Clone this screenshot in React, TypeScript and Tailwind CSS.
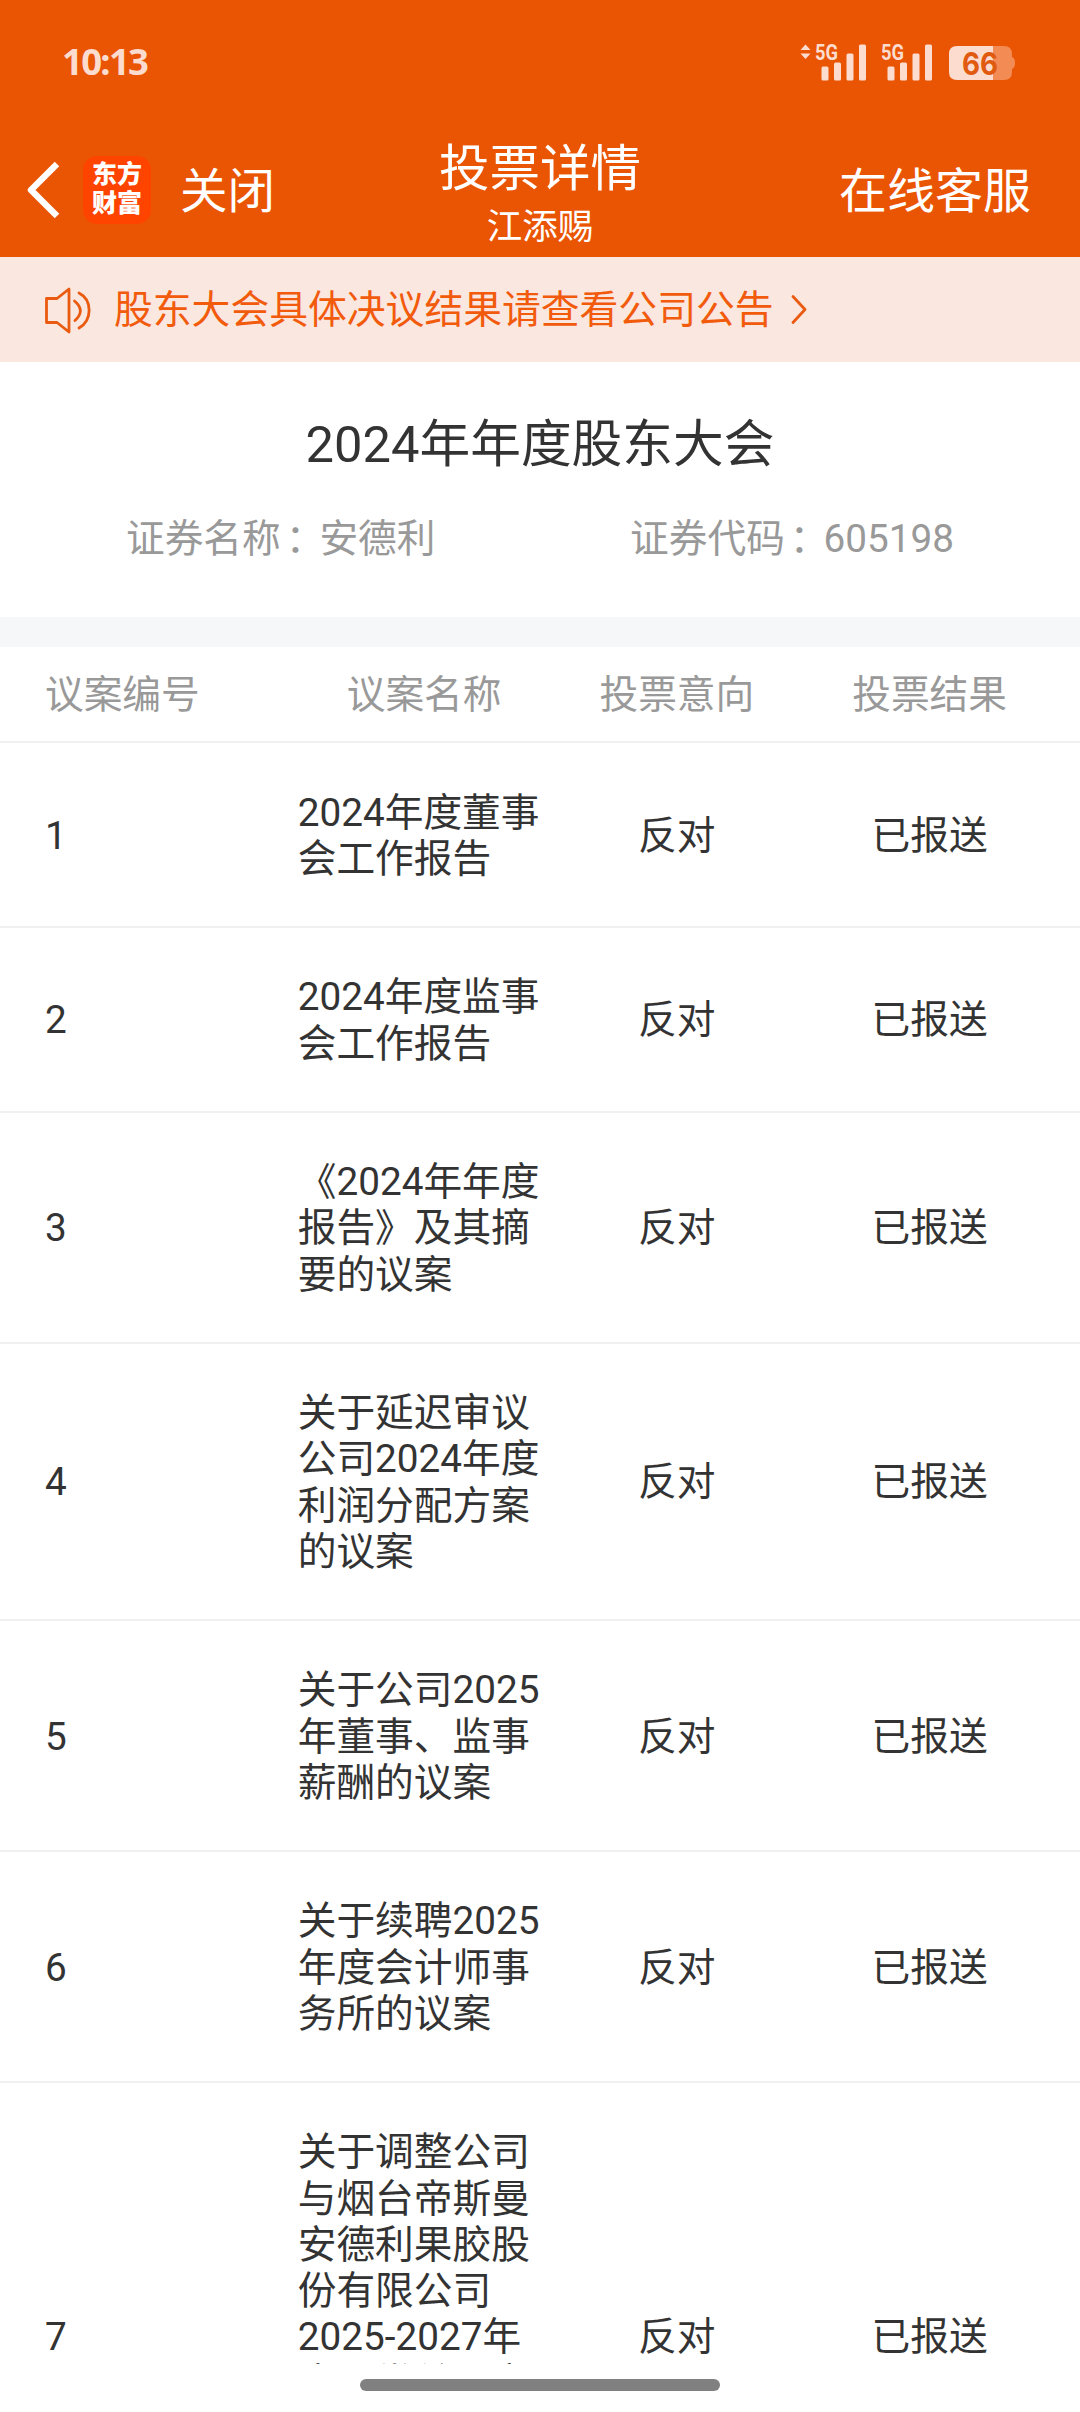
import React from 'react';

interface Proposal {
  id: number;
  name: string;
  intent: string;
  result: string;
}

const proposals: Proposal[] = [
  { id: 1, name: '2024年度董事会工作报告', intent: '反对', result: '已报送' },
  { id: 2, name: '2024年度监事会工作报告', intent: '反对', result: '已报送' },
  { id: 3, name: '《2024年年度报告》及其摘要的议案', intent: '反对', result: '已报送' },
  { id: 4, name: '关于延迟审议公司2024年度利润分配方案的议案', intent: '反对', result: '已报送' },
  { id: 5, name: '关于公司2025年董事、监事薪酬的议案', intent: '反对', result: '已报送' },
  { id: 6, name: '关于续聘2025年度会计师事务所的议案', intent: '反对', result: '已报送' },
  { id: 7, name: '关于调整公司与烟台帝斯曼安德利果胶股份有限公司2025-2027年度日常关联交', intent: '反对', result: '已报送' },
];

const Signal = ({ active }: { active?: boolean }) => (
  <svg className="overflow-visible" width="68" height="40" viewBox="0 0 68 40" fill="#fbdccf">
    {active && (
      <>
        <path d="M0.5 8 L5.5 2.5 L10.5 8 Z" />
        <path d="M0.5 11.5 L5.5 17 L10.5 11.5 Z" />
      </>
    )}
    <text x="15" y="17.5" fontSize="22.5" fontWeight="700" fontFamily="Roboto, sans-serif" textLength="23" lengthAdjust="spacingAndGlyphs">5G</text>
    <rect x="21.5" y="24.5" width="7" height="14" rx="1.5" />
    <rect x="34" y="20.5" width="7" height="18" rx="1.5" />
    <rect x="46.5" y="11.5" width="7" height="27" rx="1.5" />
    <rect x="59" y="2.5" width="7" height="36" rx="1.5" />
  </svg>
);

const Battery = () => (
  <svg width="68" height="36" viewBox="0 0 68 36">
    <path d="M44 0 H55 Q63 0 63 8 V11 Q66 12 66 17 Q66 22 63 23 V26 Q63 34 55 34 H44 Z" fill="#f38b54" />
    <path d="M8 0 H44 V34 H8 Q0 34 0 26 V8 Q0 0 8 0 Z" fill="#fbdccf" />
    <text x="13" y="28.5" fontSize="31" fontWeight="700" fontFamily="Inter, sans-serif" fill="#e05a10" textLength="36" lengthAdjust="spacingAndGlyphs">66</text>
  </svg>
);

const Field = ({ label, value }: { label: string; value: string }) => (
  <span>
    {label}
    <span className="inline-block translate-x-[5px]">：</span>
    {value}
  </span>
);

const App: React.FC = () => {
  return (
    <div className="relative w-[1080px] h-[2412px] overflow-hidden bg-white text-[#333333] text-[38.7px] leading-[46.2px] font-[Roboto,'Noto_Sans_CJK_SC',sans-serif]">
      {/* HEADER */}
      <header className="h-[257px] bg-[#ea5504] text-white">
        <div className="h-[122px] pl-[62px] pr-[63px] flex items-center justify-between">
          <span className="text-[36.5px] font-bold tracking-[-1.7px] text-[#fbdccf] font-['Noto_Sans',sans-serif]">10:13</span>
          <div className="flex items-start pt-0.5">
            <Signal active />
            <div className="w-[66px] -ml-0.5"><Signal /></div>
            <div className="ml-[17px] pt-1"><Battery /></div>
          </div>
        </div>
        <div className="h-[135px] flex items-center justify-between">
          <div className="w-[320px] flex items-center">
            <svg className="ml-[25px]" width="36" height="58" viewBox="0 0 36 58" fill="none" stroke="#fff" strokeWidth="6.4" strokeLinejoin="round">
              <path d="M32 3 L6 29 L32 55" />
            </svg>
            <div className="ml-[22px] w-[68px] h-[68px] pb-px rounded-[14px] bg-[#ff4400] flex flex-col items-center justify-center text-[25px] leading-[29px] font-black">
              <span>东方</span>
              <span>财富</span>
            </div>
            <span className="ml-[29px] pt-[5px] text-[47.5px]">关闭</span>
          </div>
          <div className="pt-[14px] flex flex-col items-center">
            <span className="text-[50.5px] leading-[60px]">投票详情</span>
            <span className="text-[35.5px] leading-[56px]">江添赐</span>
          </div>
          <div className="w-[320px] pt-[5px] pr-[49px] text-right text-[48px]">在线客服</div>
        </div>
      </header>

      {/* NOTICE */}
      <div className="h-[105px] pl-[43px] bg-[#f9e7e0] flex items-center text-[#ea5a10]">
        <svg width="48" height="48" viewBox="0 0 48 48" fill="none" stroke="currentColor" strokeWidth="2.8" strokeLinecap="round" strokeLinejoin="round">
          <path d="M3.5 12.5 H14 L26 3 V46 L14 36.5 H3.5 Z" />
          <path d="M31.5 15 Q43 24.5 32 34.5" />
          <path d="M36 7 C49.5 14 49.5 34 36 42" />
        </svg>
        <span className="ml-[23px] pt-0.5 text-[38.8px] text-[#f25a0c]">股东大会具体决议结果请查看公司公告</span>
        <svg className="ml-[15px]" width="20" height="32" viewBox="0 0 20 32" fill="none" stroke="currentColor" strokeWidth="2.8" strokeLinecap="round" strokeLinejoin="round">
          <path d="M4 2.5 L16 15.5 L4 28.5" />
        </svg>
      </div>

      {/* MEETING INFO */}
      <section className="h-[255px] pt-[53px]">
        <h1 className="text-center text-[50.7px] leading-[60px]">2024年年度股东大会</h1>
        <div className="mt-[41px] px-[126px] flex justify-between text-[#999999]">
          <Field label="证券名称" value="安德利" />
          <Field label="证券代码" value="605198" />
        </div>
      </section>

      <div className="h-[30px] bg-[#f6f7f9]" />

      {/* PROPOSALS */}
      <main className="h-[1717px] overflow-hidden">
        <div className="h-[96px] pt-0.5 pl-[45px] pr-6 grid grid-cols-4 items-center text-center text-[#999999] border-b-2 border-[#f0f0f0]">
          <span className="text-left">议案编号</span>
          <span>议案名称</span>
          <span>投票意向</span>
          <span>投票结果</span>
        </div>
        {proposals.map((item) => (
          <div
            key={item.id}
            className="pl-[45px] pr-6 pt-[46.5px] pb-[43.9px] last:h-[508px] grid grid-cols-4 items-center text-center border-b-2 border-[#f0f0f0]"
          >
            <span className="text-left">{item.id}</span>
            <span className="self-start text-left">{item.name}</span>
            <span>{item.intent}</span>
            <span>{item.result}</span>
          </div>
        ))}
      </main>

      {/* GESTURE BAR */}
      <div className="absolute left-[360px] bottom-[21px] w-[360px] h-3 rounded-full bg-[#808080]" />
    </div>
  );
};

export default App;
